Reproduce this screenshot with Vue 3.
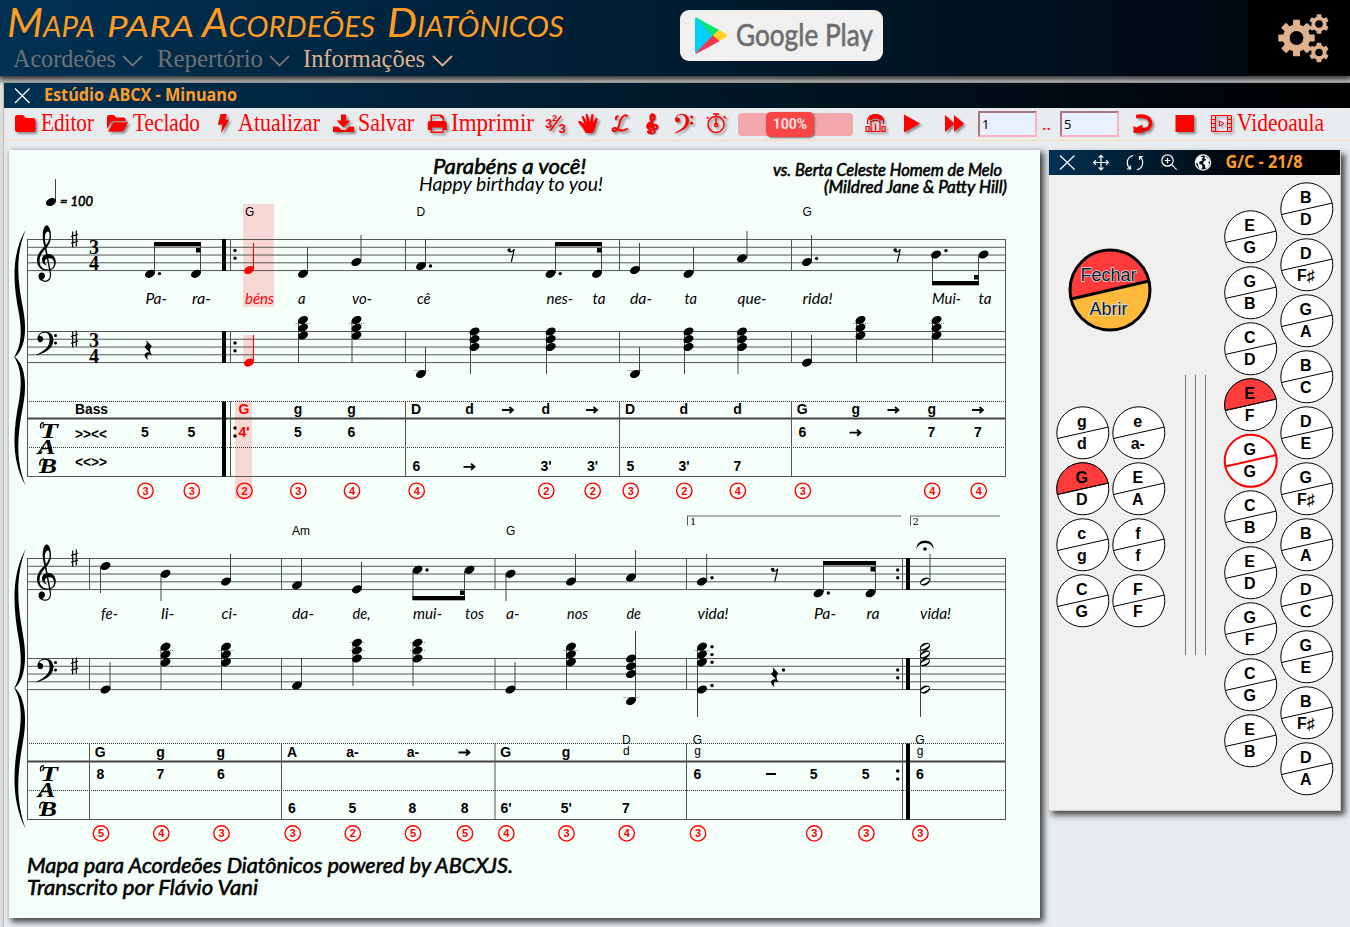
<script setup>
const titleWords = [
  { t: 'Mapa', x: 7, w: 88 },
  { t: 'para', x: 107, w: 87 },
  { t: 'Acordeões', x: 202, w: 173 },
  { t: 'Diatônicos', x: 387, w: 177 }
]
const menus = [
  { t: 'Acordeões', w: 103, full: 144, chev: 110 },
  { t: 'Repertório', w: 106, full: 146, chev: 113 },
  { t: 'Informações', w: 122, full: 160, chev: 130, on: true }
]

// one entry per note head: [x, y, flag]
const heads = [
  [51, 202], [150, 273.8], [196, 273.8], [249, 270, 'r'], [303, 273.8], [356.3, 262], [421, 266], [550.5, 273.8], [597, 273.8],
  [635, 270], [688.5, 273.8], [742, 258.3], [807, 262], [936, 254.5], [983.5, 254.5],
  [249, 362.6, 'r'], [421, 374], [635, 374], [807, 362.6],
  [105.5, 566], [165.5, 573.8], [226, 581.5], [297, 585.3], [357, 589.3], [417.5, 569.8], [469.5, 569.8], [510.5, 573.8],
  [571, 581.5], [631, 577.5], [702, 581.5], [818.5, 593.2], [870.5, 593.2], [925, 581.5, 'h'],
  [105.5, 689.5], [297, 685.5], [510.5, 689.5], [631, 701], [702, 689.5], [925, 689.5, 'h']
]
const chord = (x, ys, f) => ys.forEach(y => heads.push([x, y, f]))
for (const x of [303, 356.5, 860.5, 936.5]) chord(x, [320, 327.7, 335.5])
for (const x of [474.5, 550.7, 688.5, 742]) chord(x, [331.5, 339.2, 347])
for (const x of [165.5, 226, 571, 702]) chord(x, [646.7, 654.5, 662.3])
for (const x of [357, 417.5]) chord(x, [642.8, 650.5, 658.5])
chord(631, [658.5, 666.3, 674])
chord(925, [646.7, 654.5, 662.3], 'h')

const stems = [
  [55.5, 179, 201], [154.5, 243, 273], [200.5, 243, 273], [307.5, 247, 273], [361, 235, 261], [425.5, 239, 265],
  [555.5, 243, 273], [601.5, 243, 273], [639.5, 243, 269], [693.5, 247, 273], [747, 231, 258], [811.5, 235, 261], [932.5, 256, 285],
  [978.5, 256, 285], [298.5, 321, 363], [352, 321, 363], [425.5, 347, 373], [470.5, 333, 374], [546.5, 333, 374], [639.5, 347, 373],
  [684.5, 333, 374], [738, 333, 374], [811.5, 335, 362], [856.5, 321, 363], [932.5, 321, 363],
  [100.5, 567, 593], [161, 575, 601], [230.5, 554, 581], [301.5, 558, 584], [361.5, 562, 588], [413, 571, 600], [464.5, 571, 600],
  [506, 575, 601], [575.5, 554, 581], [635.5, 550, 577], [691.7 + 15, 554, 581], [823.5, 562, 592], [875.5, 562, 592], [930, 554, 581],
  [110, 662, 689], [161, 648, 690], [221.5, 648, 690], [301.5, 658, 685], [353, 644, 686], [413, 644, 686], [515, 662, 689],
  [566.5, 648, 690], [635.5, 631, 700], [697.5, 648, 717], [920.5, 648, 717]
]
const beams = [
  [154, 242, 47], [555, 242, 47], [932, 281, 47], [412.5, 596, 52.5], [823, 561, 53]
]
const stubs = [[196, 248], [597, 248], [974, 275], [460, 590.5], [870.5, 567]]
const ledgers = [
  [303, 323.5], [356.5, 323.5], [860.5, 323.5], [936.5, 323.5], [421, 370.5], [635, 370.5],
  [165.5, 650.5], [226, 650.5], [357, 650.5], [417.5, 650.5], [357, 642.5], [417.5, 642.5], [571, 650.5], [702, 650.5], [925, 650.5], [631, 697.5]
]
const dots = [
  [159.5, 273.6], [430.5, 266], [560.2, 273.6], [816.5, 258.5], [946, 250.6], [235, 250.5], [235, 258.3], [235, 343], [235, 350.8],
  [235, 428], [235, 436], [427, 570], [712, 577.7], [828.3, 593], [897.7, 570], [897.7, 577.7], [897.7, 670], [897.7, 677.8],
  [897.7, 771], [897.7, 779], [712, 646.8], [712, 654.6], [712, 662.3], [712, 685.5], [783.5, 670]
]
const systems = [
  { t: 239.5, b: 331.5, tab: [401.5, 418.5, 447.5, 476.5], bars: [405.5, 619.5, 791.5], thick: 222, thin: 230.5, mid: 357, end: 486 },
  { t: 558.5, b: 658.5, tab: [743.5, 761.5, 790.5, 819.5], bars: [89.5, 281.5, 495, 686.5], thick: 906, thin: 902.5, mid: 688, end: 829 }
]
const gap = 7.77
const brace = s => {
  const T = s.t - 10, M = s.mid, E = s.end, a = M - T, b = E - M
  return `M25.7 ${T} C11 ${T + a * 0.2} 13 ${T + a * 0.42} 19 ${T + a * 0.66} C22.5 ${T + a * 0.82} 20.5 ${M - a * 0.08} 14.3 ${M} ` +
    `C20.5 ${M + b * 0.08} 22.5 ${M + b * 0.18} 19 ${M + b * 0.34} C13 ${M + b * 0.58} 11 ${M + b * 0.8} 25.7 ${E} ` +
    `C15.5 ${M + b * 0.8} 17 ${M + b * 0.62} 23 ${M + b * 0.38} C27.5 ${M + b * 0.2} 24.5 ${M + b * 0.06} 15 ${M} ` +
    `C24.5 ${M - a * 0.06} 27.5 ${M - a * 0.2} 23 ${M - a * 0.38} C17 ${M - a * 0.62} 15.5 ${M - a * 0.8} 25.7 ${T} Z`
}
const sharps = [[74.5, 239], [74.5, 339], [74.5, 558], [74.5, 666]]
const lyrics = [
  [304, [['Pa-', 145.5, 21.5], ['ra-', 192, 19], ['béns', 245, 29, 1], ['a', 298, 7.5], ['vo-', 352, 20], ['cê', 417, 13.5], ['nes-', 546.5, 26.5],
    ['ta', 592.5, 13], ['da-', 630, 22], ['ta', 684.5, 12.5], ['que-', 737.5, 29], ['rida!', 802.5, 30], ['Mui-', 932, 29], ['ta', 978.5, 13]]],
  [619, [['fe-', 101, 17], ['li-', 161, 13.5], ['ci-', 221.5, 16], ['da-', 292, 22], ['de,', 352.5, 18], ['mui-', 413, 29], ['tos', 465, 19],
    ['a-', 506, 13.5], ['nos', 567, 21], ['de', 626.5, 14.5], ['vida!', 697.5, 31], ['Pa-', 814, 22], ['ra', 866.5, 13], ['vida!', 920, 31]]]
]
const lyricItems = lyrics.flatMap(([y, l]) => l.map(i => ({ t: i[0], x: i[1], w: i[2], r: i[3], y })))
const names = [['G', 245, 216], ['D', 416.5, 216], ['G', 802.5, 216], ['Am', 292, 535], ['G', 506, 535]]
const rows = [
  [414, [['G', 244, 1], ['g', 298], ['g', 351.5], ['D', 416], ['d', 469.5], ['d', 545.7], ['D', 630], ['d', 683.7], ['d', 737.5], ['G', 802.3], ['g', 855.7], ['g', 931.7]]],
  [437, [['5', 145], ['5', 191.5], ["4'", 244, 1], ['5', 298], ['6', 351.5], ['6', 802.3], ['7', 931.5], ['7', 978]]],
  [471, [['6', 416.3], ["3'", 546], ["3'", 592.5], ['5', 630.3], ["3'", 684], ['7', 737.3]]],
  [757, [['G', 100.3], ['g', 160.5], ['g', 220.7], ['A', 292], ['a-', 352.5], ['a-', 413], ['G', 505.7], ['g', 566]]],
  [779, [['8', 100.3], ['7', 160.5], ['6', 221], ['6', 697.3], ['5', 813.7], ['5', 865.7], ['6', 920]]],
  [812.7, [['6', 292], ['5', 352.3], ['8', 412.3], ['8', 464.7], ["6'", 506], ["5'", 566.3], ['7', 626]]]
]
const tabs = rows.flatMap(([y, l]) => l.map(i => ({ t: i[0], x: i[1], r: i[2], y })))
const arrows = [[508, 410], [592, 410], [893.5, 410], [978, 410], [855.5, 432.7], [469.5, 466.8], [464.5, 752.5]]
const smallNames = [['D', 626.3, 744], ['d', 626.3, 755], ['G', 697.5, 744], ['g', 697.5, 755], ['G', 920, 744], ['g', 920, 755]]
const fingers = [
  [490.8, [[145.5, 3], [191.8, 3], [244.5, 2], [298.3, 3], [352, 4], [416.7, 4], [546.3, 2], [592.7, 2], [630.7, 3], [684.3, 2], [737.8, 4], [802.8, 3], [932.2, 4], [978.7, 4]]],
  [833.4, [[101, 5], [161.3, 4], [221.5, 3], [292.7, 3], [352.8, 2], [413, 5], [465, 5], [506.3, 4], [566.5, 3], [626.7, 4], [698, 3], [814.2, 3], [866.4, 3], [920.4, 3]]]
]
const fingerItems = fingers.flatMap(([y, l]) => l.map(([x, n]) => ({ x, y, n })))

const keys = []
const column = (x, y, list) => list.forEach((k, i) => keys.push({ x, y: y + i * 56, a: k[0], b: k[1], s: k[2] }))
column(1250.7, 236.8, [['E', 'G'], ['G', 'B'], ['C', 'D'], ['E', 'F', 'fill'], ['G', 'G', 'ring'], ['C', 'B'], ['E', 'D'], ['G', 'F'], ['C', 'G'], ['E', 'B']])
column(1306.8, 208.8, [['B', 'D'], ['D', 'F♯'], ['G', 'A'], ['B', 'C'], ['D', 'E'], ['G', 'F♯'], ['B', 'A'], ['D', 'C'], ['G', 'E'], ['B', 'F♯'], ['D', 'A']])
column(1082.8, 432.8, [['g', 'd'], ['G', 'D', 'fill'], ['c', 'g'], ['C', 'G']])
column(1138.8, 432.8, [['e', 'a-'], ['E', 'A'], ['f', 'f'], ['F', 'F']])
const teeth = n => Array.from({ length: n }, (_, i) => (i * 360) / n)
const gears = [{ x: 1296.5, y: 38, r: 13, h: 6.3, n: 8, t: 7 }, { x: 1319, y: 24, r: 7, h: 3.2, n: 6, t: 4.8 }, { x: 1319, y: 52.5, r: 7, h: 3.2, n: 6, t: 4.8 }]
const TREBLE = 'M44.6 247 C41 236 43 226 46.7 225.2 C49.5 226 51 231 51 236 C51 243 47.5 247 44 250.5 C40.5 254.5 39.6 257.5 39.6 261 C39.6 266.5 43 269.5 47.5 269.5 C51.5 269.5 54 267 54 263.4 C54 260 52.2 258.3 49.6 258.3 C46 258.3 44.7 260.3 45 262.2 C45.2 263.8 46.3 265 47.5 265.6 C44 265 42 262.5 42 259.5 C42 256 45 254 48.5 254 C53 254 55.8 257.8 55.8 262 C55.8 267.5 52 270.8 47 270.8 C41.5 270.8 37 267 37 260.5 C37 255.5 39.5 251.5 43.5 247.5 C48 243 49.6 240 49.6 235.5 C49.6 232 48.5 231 47.5 231.5 C44.5 233 44.4 238 45.5 243 L50.8 272 C51.8 278 49.5 281.8 45.5 281.8 C41.5 281.8 38.5 279.5 38.5 276.3 C38.5 274 40 272.6 41.8 272.6 C44 272.6 45 274.2 45 275.8 C45 277.8 43.8 279 42.3 279.4 C45 281.8 51 281 49.7 273 Z'
const BASS = 'M37.5 338.5 C37.5 334.5 41 331.6 45.5 331.6 C50.5 331.6 53.4 335.5 53.4 340 C53.4 347.5 46.5 352.5 37.2 355.2 L36.8 354.4 C45 350.5 49.6 346.5 49.6 340 C49.6 335.5 48 332.8 44.8 332.8 C42 332.8 39.8 334 39.2 336.1 C41.5 335.6 43.2 337 43.2 339 C43.2 341 41.8 342.2 40.2 342.2 C38.5 342.2 37.5 340.6 37.5 338.5 Z'
</script>

<template>
  <div class="page">
    <header class="top">
      <div class="brand">
        <svg class="logo" width="600" height="46" viewBox="0 0 600 46">
          <text v-for="w in titleWords" :key="w.t" :x="w.x" y="37" :textLength="w.w" lengthAdjust="spacingAndGlyphs">{{ w.t }}</text>
        </svg>
        <nav class="menu">
          <svg v-for="m in menus" :key="m.t" :class="{ on: m.on }" :width="m.full" height="28" :viewBox="`0 0 ${m.full} 28`">
            <text x="0" y="21" :textLength="m.w" lengthAdjust="spacingAndGlyphs">{{ m.t }}</text>
            <path :d="`M${m.chev} 10 l9.5 9.5 l9.5 -9.5`" />
          </svg>
        </nav>
      </div>
      <div class="play">
        <svg width="203" height="51" viewBox="680 10 203 51">
          <path fill="#00cfff" d="M695 19v33c0 1.200 1 1.400 1.600.800L713 35.500 696.600 18c-.7-.6-1.600-.2-1.600 1z" />
          <path fill="#00e676" d="M695.600 17.700c.5-.3 1-.1 1.500.2L719.500 30.200 713 36z" />
          <path fill="#ffd427" d="M719 29.800l6.700 3.800c1.700 1 1.700 2.800 0 3.800l-6.700 4-6.300-5.900z" />
          <path fill="#f5354d" d="M713 35.300l6.500 5.900-22.300 12c-.6.300-1.100.2-1.600-.1z" />
          <text x="736" y="46" textLength="137" lengthAdjust="spacingAndGlyphs">Google Play</text>
        </svg>
      </div>
      <div class="gearbox">
        <svg width="102" height="75" viewBox="1248 0 102 75">
          <g v-for="(g, i) in gears" :key="i">
            <rect v-for="a in teeth(g.n)" :key="a" :x="g.x - g.t / 2" :y="g.y - g.r * 1.4" :width="g.t" :height="g.r * 0.8" rx="0.8" :transform="`rotate(${a} ${g.x} ${g.y})`" />
            <circle :cx="g.x" :cy="g.y" :r="(g.r + g.h) / 2 + 0.6" fill="none" stroke="#deb28e" :stroke-width="g.r - g.h" />
          </g>
        </svg>
      </div>
    </header>

    <main class="window">
      <div class="titlebar">
        <svg width="1346" height="25" viewBox="4 83 1346 25">
          <path d="M15 88.500l14.500 14.500M29.500 88.500L15 103" stroke="#fff" stroke-width="1.300" />
          <text x="44" y="100.500" textLength="193" lengthAdjust="spacingAndGlyphs">Estúdio ABCX - Minuano</text>
        </svg>
      </div>

      <div class="toolbar">
        <svg width="85" height="32" viewBox="15 108 85 32">
          <path class="ic" d="M15 117a2 2 0 0 1 2-2h6l2.500 3H33a2.500 2.500 0 0 1 2.500 2.500v9A2.500 2.500 0 0 1 33 132H17a2 2 0 0 1-2-2z" />
          <text x="41" y="131" textLength="53" lengthAdjust="spacingAndGlyphs">Editor</text>
        </svg>
        <svg width="100" height="32" viewBox="107 108 100 32">
          <path class="ic" d="M107 117a2 2 0 0 1 2-2h5l2 2.500h7.500a2 2 0 0 1 2 2v1.500H113q-1.500 0-2.300 1.500L107 129zM108 131.500l4.600-8q.6-1.200 2-1.200h13.600l-4.500 8.300q-.6 1-2 1z" />
          <text x="133" y="131" textLength="67" lengthAdjust="spacingAndGlyphs">Teclado</text>
        </svg>
        <svg width="110" height="32" viewBox="217 108 110 32">
          <path class="ic" d="M220.500 114h6.500l-2 6.200 4.500-1L221 133.500l1.500-9.500-4.700 1z" />
          <text x="238" y="131" textLength="82" lengthAdjust="spacingAndGlyphs">Atualizar</text>
        </svg>
        <svg width="90" height="32" viewBox="333 108 90 32">
          <path class="ic" d="M341 114.500h5v6h4.500l-7 7-7-7h4.500zM333 126.500h5l3.500 3.500h4l3.500-3.500h5v5.500H333z" />
          <text x="358" y="131" textLength="56" lengthAdjust="spacingAndGlyphs">Salvar</text>
        </svg>
        <svg width="112" height="32" viewBox="427 108 112 32">
          <path class="ic" fill-rule="evenodd" d="M430.500 114.500h11l2.500 2.500v4h.7q2 0 2 2v7h-3v3h-13v-3h-3v-7q0-2 2.300-2h.5zM432 116v5h10.500v-3h-2v-2zM432 127.500v4h10.500v-4z" />
          <text x="451" y="131" textLength="83" lengthAdjust="spacingAndGlyphs">Imprimir</text>
        </svg>
        <svg width="28" height="32" viewBox="545 108 28 32">
          <g class="ic num"><text x="545" y="128">3</text><text x="552" y="121" class="tiny">2</text><text x="558.500" y="133">3</text><path d="M550 131l11-15" stroke="#f00" stroke-width="1.500" /></g>
        </svg>
        <svg width="28" height="32" viewBox="578 108 28 32">
          <path class="ic" d="M585.500 133q-1-3-3.500-6-3-3-4-5.500l2-.7 4.500 3.200-3-7.500 1.700-.8 3.800 6.500-1.500-8 2-.3 2.500 8 1.500-8 2 .3-.5 8.500 3.300-5 1.700 1-2.500 7.800q-.8 3.500-3 6.500z" />
        </svg>
        <svg width="28" height="32" viewBox="611 108 28 32">
          <path class="ic line" d="M627.500 116.500c-4-4-7 3-8.500 8.500-1 4-3 7-5.500 6s0-4 3-2.500 6 3.500 11.500 0M616.500 120q-2-3 2-4" stroke-width="2" />
        </svg>
        <svg width="28" height="32" viewBox="644 108 28 32">
          <path class="ic" :d="TREBLE" stroke="#f00" stroke-width="2.500" transform="translate(625.700 34.500) scale(.57 .352)" />
        </svg>
        <svg width="28" height="32" viewBox="674 108 28 32">
          <g class="ic" transform="translate(642.500 -161.500) scale(.87 .83)"><path :d="BASS" /><circle cx="56.500" cy="335.500" r="1.700" /><circle cx="56.500" cy="343" r="1.700" /></g>
        </svg>
        <svg width="28" height="32" viewBox="706 108 28 32">
          <path class="ic line" stroke-width="1.500" d="M713 114h6M716 114v3M708.500 117l-1.500 1.500M723.500 116l2.500 2.500M716 118v5M716 116.400a8 8 0 1 0 .1 0zM716 123.500a1.500 1.500 0 1 0 .1 0z" />
        </svg>
        <div class="slider"><span class="thumb">100%</span></div>
        <svg width="28" height="32" viewBox="865 108 28 32">
          <path class="ic line" stroke-width="1.200" d="M867.500 124v-2q0-7.500 8-7.500t8 7.500v2M866 126.500h3v5h-3zM882 126.500h3v5h-3zM871 121v11M880 121v11M871 121.500q4.500-2 9 0M875.500 124v8M871 131.500h9" />
          <path class="ic" d="M868.500 119.500q2-5.500 7-5.500t7 5.500l-2 1q-2-2-5-2t-5 2z" />
        </svg>
        <svg width="28" height="32" viewBox="904 108 28 32"><path class="ic" d="M904 114.500l16 9-16 9z" /></svg>
        <svg width="28" height="32" viewBox="944 108 28 32"><path class="ic" d="M945 115l9 8v-8l10 8.500-10 8.500v-8l-9 8z" /></svg>
        <span class="field">1</span>
        <span class="sep">..</span>
        <span class="field">5</span>
        <svg width="28" height="32" viewBox="1133 108 28 32">
          <path class="ic line" stroke-width="3.600" d="M1136 116.500q10-1.500 13 2.500 3 5 0 8.500-2.500 2.700-8 2" />
          <path class="ic" d="M1142.500 124.500v8.500h-9v-7l2.800 1.500z" />
        </svg>
        <svg width="28" height="32" viewBox="1175 108 28 32"><path class="ic" d="M1175.500 115h18.500v17h-18.500z" /></svg>
        <svg width="125" height="32" viewBox="1211 108 125 32">
          <path class="ic line" stroke-width="1" d="M1211.500 115.500h20v16h-20zM1215.500 115.500v16M1227.500 115.500v16M1211.500 119.500h4M1211.500 123.500h4M1211.500 127.500h4M1227.500 119.500h4M1227.500 123.500h4M1227.500 127.500h4M1219.500 121l4.500 2.500-4.500 2.500z" />
          <text x="1237" y="131" textLength="87" lengthAdjust="spacingAndGlyphs">Videoaula</text>
        </svg>
      </div>

      <div class="work">
        <section class="paper">
          <svg class="score" width="1031" height="768" viewBox="9 150 1031 768">
            <g fill="#f8d8d5">
              <rect x="243" y="204" width="31" height="103" /><rect x="243" y="335" width="11" height="27" /><rect x="235" y="400" width="17" height="99" />
            </g>

            <g v-for="s in systems" :key="s.t">
              <path :d="brace(s)" />
              <template v-for="n in 5" :key="n">
                <path class="ln" :d="`M27 ${s.t + (n - 1) * gap}H1006`" />
                <path class="ln" :d="`M27 ${s.b + (n - 1) * gap}H1006`" />
              </template>
              <path class="dotted" :d="`M27 ${s.tab[0]}H1006M27 ${s.tab[2]}H1006`" />
              <path class="ln heavy" :d="`M27 ${s.tab[1]}H1006`" />
              <path class="ln" :d="`M27 ${s.tab[3]}H1006M27.500 ${s.t}V${s.tab[3]}M1005.500 ${s.t}V${s.tab[3]}`" />
              <path v-for="x in s.bars.concat(s.thin)" :key="x" class="ln" :d="`M${x} ${s.t}v31M${x} ${s.b}v31M${x} ${s.tab[0]}V${s.tab[3]}`" />
              <path :d="`M${s.thick} ${s.t - .5}h4v32h-4zM${s.thick} ${s.b - .5}h4v32h-4zM${s.thick} ${s.tab[0]}h4V${s.tab[3]}h-4z`" />
              <path :d="TREBLE" :transform="`translate(0 ${s.t - 239.5})`" />
              <g :transform="`translate(0 ${s.b - 331.5})`"><path :d="BASS" /><circle cx="55.500" cy="335.400" r="1.500" /><circle cx="55.500" cy="343" r="1.500" /></g>
              <g class="tabclef">
                <text x="40" :y="s.tab[1] + 19.500" textLength="18" lengthAdjust="spacingAndGlyphs">T</text>
                <text x="37.500" :y="s.tab[1] + 35.500" textLength="18" lengthAdjust="spacingAndGlyphs">A</text>
                <text x="39" :y="s.tab[1] + 54.500" textLength="18" lengthAdjust="spacingAndGlyphs">B</text>
              </g>
              <path class="swash" :d="`M41 ${s.tab[1] + 10}q-2-5.500 3-5.800M38 ${s.tab[1] + 35}q2 .5 4-2M40 ${s.tab[1] + 47}q-1-6 4-6.500`" />
            </g>

            <path v-for="(p, i) in sharps" :key="'s' + i" :transform="`translate(${p[0]} ${p[1]})`" d="M-1.800 -7.500v16M1.800 -8.500v16M-3.500 -2.500l7-2.200M-3.500 4.300l7-2.200" class="sharp" />
            <g class="time"><text x="94" y="254">3</text><text x="94" y="270">4</text><text x="94" y="346.500">3</text><text x="94" y="362.500">4</text></g>

            <path v-for="(l, i) in ledgers" :key="'l' + i" class="ledger" :d="`M${l[0] - 7.500} ${l[1]}h15`" />
            <path v-for="(l, i) in stems" :key="'t' + i" class="stem" :d="`M${l[0]} ${l[1]}V${l[2]}`" />
            <path d="M253.500 243V269M253.500 335V362" stroke="red" />
            <template v-for="(h, i) in heads" :key="'h' + i">
              <ellipse v-if="h[2] !== 'h'" :cx="h[0]" :cy="h[1]" rx="5.300" ry="3.700" :fill="h[2] === 'r' ? 'red' : '#000'" :transform="`rotate(-28 ${h[0]} ${h[1]})`" />
              <g v-else :transform="`rotate(-28 ${h[0]} ${h[1]})`"><ellipse :cx="h[0]" :cy="h[1]" rx="5.300" ry="3.600" /><ellipse :cx="h[0]" :cy="h[1]" rx="4.500" ry="1.600" fill="#f5fffa" /></g>
            </template>
            <rect v-for="(b, i) in beams" :key="'b' + i" :x="b[0]" :y="b[1]" :width="b[2]" height="4.300" />
            <rect v-for="(b, i) in stubs" :key="'u' + i" :x="b[0]" :y="b[1]" width="4.500" height="4.500" />
            <circle v-for="(d, i) in dots" :key="'d' + i" :cx="d[0]" :cy="d[1]" r="1.700" />

            <g v-for="p in [[511, 248], [897, 248], [774.500, 567.500]]" :key="p[0]" :transform="`translate(${p[0]} ${p[1]})`">
              <circle cx="-1.800" cy="2" r="1.800" /><path d="M-2.500 3.200q3.500 1.800 5.800-2L.3 14" class="rest8" />
            </g>
            <path v-for="p in [[148, 339.500], [774.500, 666.500]]" :key="p[0]" :transform="`translate(${p[0]} ${p[1]})`" d="M-2.500 0L3.800 6.800Q0 10.500 4.200 15.500Q-2.500 13 0 20.500Q-6.500 15.500-1 12.800Q1 12.500 1.500 13L-3.500 7.500Q.5 4-2.500 0z" />
            <path d="M916 551q0-10.500 9-10.500t9 10.500q-1.500-8-9-8t-9 8z" /><circle cx="925" cy="549" r="1.800" />

            <path d="M687 516H901M910 516H1000" stroke="#aab2ae" stroke-width="2" />
            <path d="M687.500 516v9.500M910.500 516v9.500" stroke="#555" />
            <g class="volta"><text x="690" y="525">1</text><text x="912.500" y="525">2</text></g>

            <g class="hand strong">
              <text x="60" y="205.500" textLength="33" lengthAdjust="spacingAndGlyphs" class="tempo">= 100</text>
              <text x="433" y="173.500" textLength="153" lengthAdjust="spacingAndGlyphs" font-size="22">Parabéns a você!</text>
              <text x="773" y="175.500" textLength="229" lengthAdjust="spacingAndGlyphs" font-size="17">vs. Berta Celeste Homem de Melo</text>
              <text x="824" y="192.500" textLength="183" lengthAdjust="spacingAndGlyphs" font-size="17">(Mildred Jane &amp; Patty Hill)</text>
              <text x="27" y="872.500" textLength="486" lengthAdjust="spacingAndGlyphs" font-size="22">Mapa para Acordeões Diatônicos powered by ABCXJS.</text>
              <text x="27" y="894.500" textLength="231" lengthAdjust="spacingAndGlyphs" font-size="22">Transcrito por Flávio Vani</text>
            </g>
            <g class="hand">
              <text x="419" y="190.500" textLength="184" lengthAdjust="spacingAndGlyphs" font-size="19">Happy birthday to you!</text>
              <text v-for="(l, i) in lyricItems" :key="i" :x="l.x" :y="l.y" :textLength="l.w" lengthAdjust="spacingAndGlyphs" font-size="15" :fill="l.r ? 'red' : '#000'">{{ l.t }}</text>
            </g>
            <g class="sans">
              <text v-for="(n, i) in names" :key="i" :x="n[1]" :y="n[2]">{{ n[0] }}</text>
              <text v-for="(n, i) in smallNames" :key="'m' + i" :x="n[1]" :y="n[2]" text-anchor="middle">{{ n[0] }}</text>
            </g>
            <g class="tabs">
              <text x="75" y="414" textLength="33" lengthAdjust="spacingAndGlyphs">Bass</text><text x="75" y="439" textLength="32" lengthAdjust="spacingAndGlyphs">&gt;&gt;&lt;&lt;</text><text x="75" y="467" textLength="32" lengthAdjust="spacingAndGlyphs">&lt;&lt;&gt;&gt;</text>
              <text v-for="(n, i) in tabs" :key="i" :x="n.x" :y="n.y" text-anchor="middle" :fill="n.r ? 'red' : '#000'">{{ n.t }}</text>
              <path d="M766 773h10v2h-10z" />
            </g>
            <path v-for="(a, i) in arrows" :key="'a' + i" class="arrow" :transform="`translate(${a[0]} ${a[1]})`" d="M-6 0H4.500M1.500 -3L5 0L1.500 3" />
            <g v-for="(f, i) in fingerItems" :key="'f' + i" class="finger"><circle :cx="f.x" :cy="f.y" r="7.700" /><text :x="f.x" :y="f.y + 4">{{ f.n }}</text></g>
          </svg>
        </section>

        <aside class="keyboard">
          <div class="kbar">
            <svg width="291" height="25" viewBox="1049 150 291 25" fill="none" stroke="#fff" stroke-width="1.200">
              <path d="M1060 155.500l14.500 14M1074.500 155.500l-14.500 14" />
              <path d="M1101 155.500v14.500M1093.500 162.500h15M1098.700 157.700l2.300-2.300 2.300 2.300M1098.700 167.500l2.300 2.300 2.300-2.300M1096 160.200l-2.300 2.300 2.300 2.300M1106 160.200l2.300 2.300-2.300 2.300" />
              <path d="M1133 155.500q-5.500 1.500-5.700 7 0 4 3 6.300M1130.500 165.500v3.500h-3.500M1137 169.800q5.500-1.500 5.700-7 0-4-3-6.300M1139.500 160v-3.500h3.500" />
              <circle cx="1167.500" cy="160.500" r="5.700" /><path d="M1171.700 164.700l5 5M1164.700 160.500h5.600M1167.500 157.700v5.600" />
              <circle cx="1203" cy="162.500" r="7.600" />
              <path stroke="none" fill="#fff" d="M1196.500 158.500l3.500-2.500 3.500 1.500-2 1.500 1 1.500-3 1-.5 2 3 1.500.5 2-1.500 2.500-2.500-2.500-.5-3-2.500-2zM1205 156l3.500 2.500 1.500 3-2 .5 1.500 2-1.500 3.500-2.500 1-.5-3.500-2-1.500 1-2.500 2.500-1-2-1.500z" />
              <text x="1225.500" y="167.500" textLength="77" lengthAdjust="spacingAndGlyphs">G/C - 21/8</text>
            </svg>
          </div>
          <svg class="keys" width="291" height="635" viewBox="1049 175 291 635">
            <path d="M1185.500 375V655M1195.500 375V655M1205.500 375V655" stroke="#777" />
            <circle cx="1110" cy="290" r="40" fill="#ffba3b" />
            <path d="M1071 299A40 40 0 0 1 1149 281z" fill="#ff3b3b" />
            <path d="M1071 299L1149 281" stroke="#000" stroke-width="3" /><circle cx="1110" cy="290" r="40" fill="none" stroke="#000" stroke-width="3" />
            <g class="mode"><text x="1108.500" y="281">Fechar</text><text x="1108.500" y="315">Abrir</text></g>
            <g v-for="(k, i) in keys" :key="i" :transform="`translate(${k.x} ${k.y})`" :class="['key', k.s]">
              <circle r="26" /><path class="half" d="M-25.400 5.700A26 26 0 0 1 25.400 -5.700z" /><path class="cut" d="M-25.400 5.700L25.400 -5.700" />
              <text x="-1" y="-5.500">{{ k.a }}</text><text x="-1" y="16.300">{{ k.b }}</text>
            </g>
          </svg>
        </aside>
      </div>
    </main>
  </div>
</template>

<style>
body { margin: 0; background: #fff; }
</style>

<style scoped>
.page { width: 1350px; height: 927px; overflow: hidden; display: flex; flex-direction: column; gap: 6px; background: #ddd; font-family: "Liberation Sans", sans-serif; }
svg { display: block; overflow: visible; }
.top { height: 76px; flex: none; display: flex; background: linear-gradient(90deg, #003153, #001c30 50%, #00060c); box-shadow: 0 2px 6px 2px #333; position: relative; }
.brand { width: 680px; }
.logo text { font: italic 400 40px Lato, sans-serif; font-variant: small-caps; fill: #ff9a22; }
.menu { display: flex; margin-left: 13px; }
.menu svg { color: #707070; }
.menu .on { color: #deb28e; }
.menu text { font: 25px "Liberation Serif", serif; fill: currentColor; }
.menu path { fill: none; stroke: currentColor; stroke-width: 1.8; }
.play { width: 203px; height: 51px; margin-top: 10px; border-radius: 9px; background: #f0f0f0; }
.play text { font: 30px Lato, sans-serif; fill: #6d6d6d; stroke: #6d6d6d; stroke-width: .6; }
.gearbox { margin-left: auto; height: 75px; background: #000; fill: #deb28e; }
.window { flex: 1; margin-left: 3px; border-left: 1px solid #bbb; border-top: 1px solid #aaa; background: #e9ecef; }
.titlebar { height: 25px; background: linear-gradient(90deg, #003153, #000); }
.titlebar text, .kbar text { font: 700 17px "Open Sans", sans-serif; fill: #ff9c2a; stroke: none; }
.toolbar { box-sizing: border-box; height: 33px; padding-left: 11px; border-bottom: 1px solid #fbd9bb; display: grid; align-items: center;
  grid-template-columns: 92px 110px 116px 94px 118px 33px 33px 33px 30px 32px 32px 127px 39px 40px 34px 64px 18px 73px 42px 36px 125px; }
.toolbar svg text { font: 25px "Liberation Serif", serif; fill: #f00; }
.ic { fill: #f00; filter: drop-shadow(2px 2px 1px rgba(0, 0, 0, .4)); }
.ic.line { fill: none; stroke: #f00; }
.toolbar .num text { font: 700 13px "Liberation Sans", sans-serif; }
.toolbar .num .tiny { font-size: 9px; }
.slider { width: 115px; height: 23px; border-radius: 4px; background: #f1a7ab; display: flex; justify-content: center; align-items: center; padding-top: 1px; box-sizing: border-box; }
.thumb { width: 48px; height: 25px; flex: none; margin-right: 11px; border-radius: 5px; background: #fa4545; color: #fbe0e0; font: 700 14px/25px Roboto, sans-serif; text-align: center; box-shadow: 1px 1px 2px #777; }
.field { width: 59px; height: 26px; box-sizing: border-box; border: 2px solid #ffb1c1; border-top-color: #a97680; border-left-color: #a97680; background: #e8f0fe; font: 13px/23px "Noto Sans", sans-serif; padding-left: 2px; }
.sep { color: #f00; font: 18px/20px "Liberation Serif", serif; }
.work { display: flex; align-items: flex-start; gap: 8px; padding: 9px 0 0 5px; }
.paper { flex: none; width: 1031px; height: 768px; background: #f5fffa; box-shadow: 3px 3px 6px 1px #444; }
.keyboard { flex: none; width: 291px; height: 660px; background: #f0f0f0; border: 1px solid #ccc; border-width: 0 1px 1px; box-shadow: 4px 4px 6px #444; }
.kbar { height: 25px; background: linear-gradient(90deg, #003153, #000 75%); }
.ln { fill: none; stroke: #555; stroke-width: 1; }
.heavy { stroke: #444; stroke-width: 2; }
.dotted { fill: none; stroke: #333; stroke-dasharray: 1 1; }
.ledger { stroke: #444; stroke-width: .7; stroke-dasharray: 1 1; }
.stem { stroke: #444; stroke-width: 1; }
.sharp { fill: none; stroke: #000; stroke-width: 1.2; }
.time text { font: 700 20px "Liberation Serif", serif; text-anchor: middle; }
.tabclef text { font: italic 700 22px "Liberation Serif", serif; }
.swash { fill: none; stroke: #000; stroke-width: 1.4; }
.rest8 { fill: none; stroke: #000; stroke-width: 1.2; }
.volta text { font: 10px "DejaVu Serif", serif; }
.hand { font-family: Lato, sans-serif; font-style: italic; }
.strong { font-weight: 400; stroke: #000; stroke-width: .6; }
.tempo { font-size: 14px; }
.sans text { font: 12px "Liberation Sans", sans-serif; }
.tabs text { font: 700 14px "Liberation Sans", sans-serif; }
.arrow { fill: none; stroke: #000; stroke-width: 1.8; }
.finger circle { fill: none; stroke: #f00; stroke-width: 1.4; }
.finger text { font: 700 11px "Liberation Sans", sans-serif; fill: #f00; text-anchor: middle; }
.mode text { font: 18px "Liberation Sans", sans-serif; text-anchor: middle; fill: #0b1a33; stroke: #ddd; stroke-width: 1.5; paint-order: stroke; }
.key circle { fill: #fff; stroke: #000; }
.key text { font: 700 16px "Liberation Sans", "DejaVu Sans", sans-serif; text-anchor: middle; }
.half { fill: none; }
.fill .half { fill: #ff3b3b; stroke: #000; }
.cut { stroke: #000; }
.ring circle, .ring .cut { stroke: #f00; stroke-width: 2; }
</style>
